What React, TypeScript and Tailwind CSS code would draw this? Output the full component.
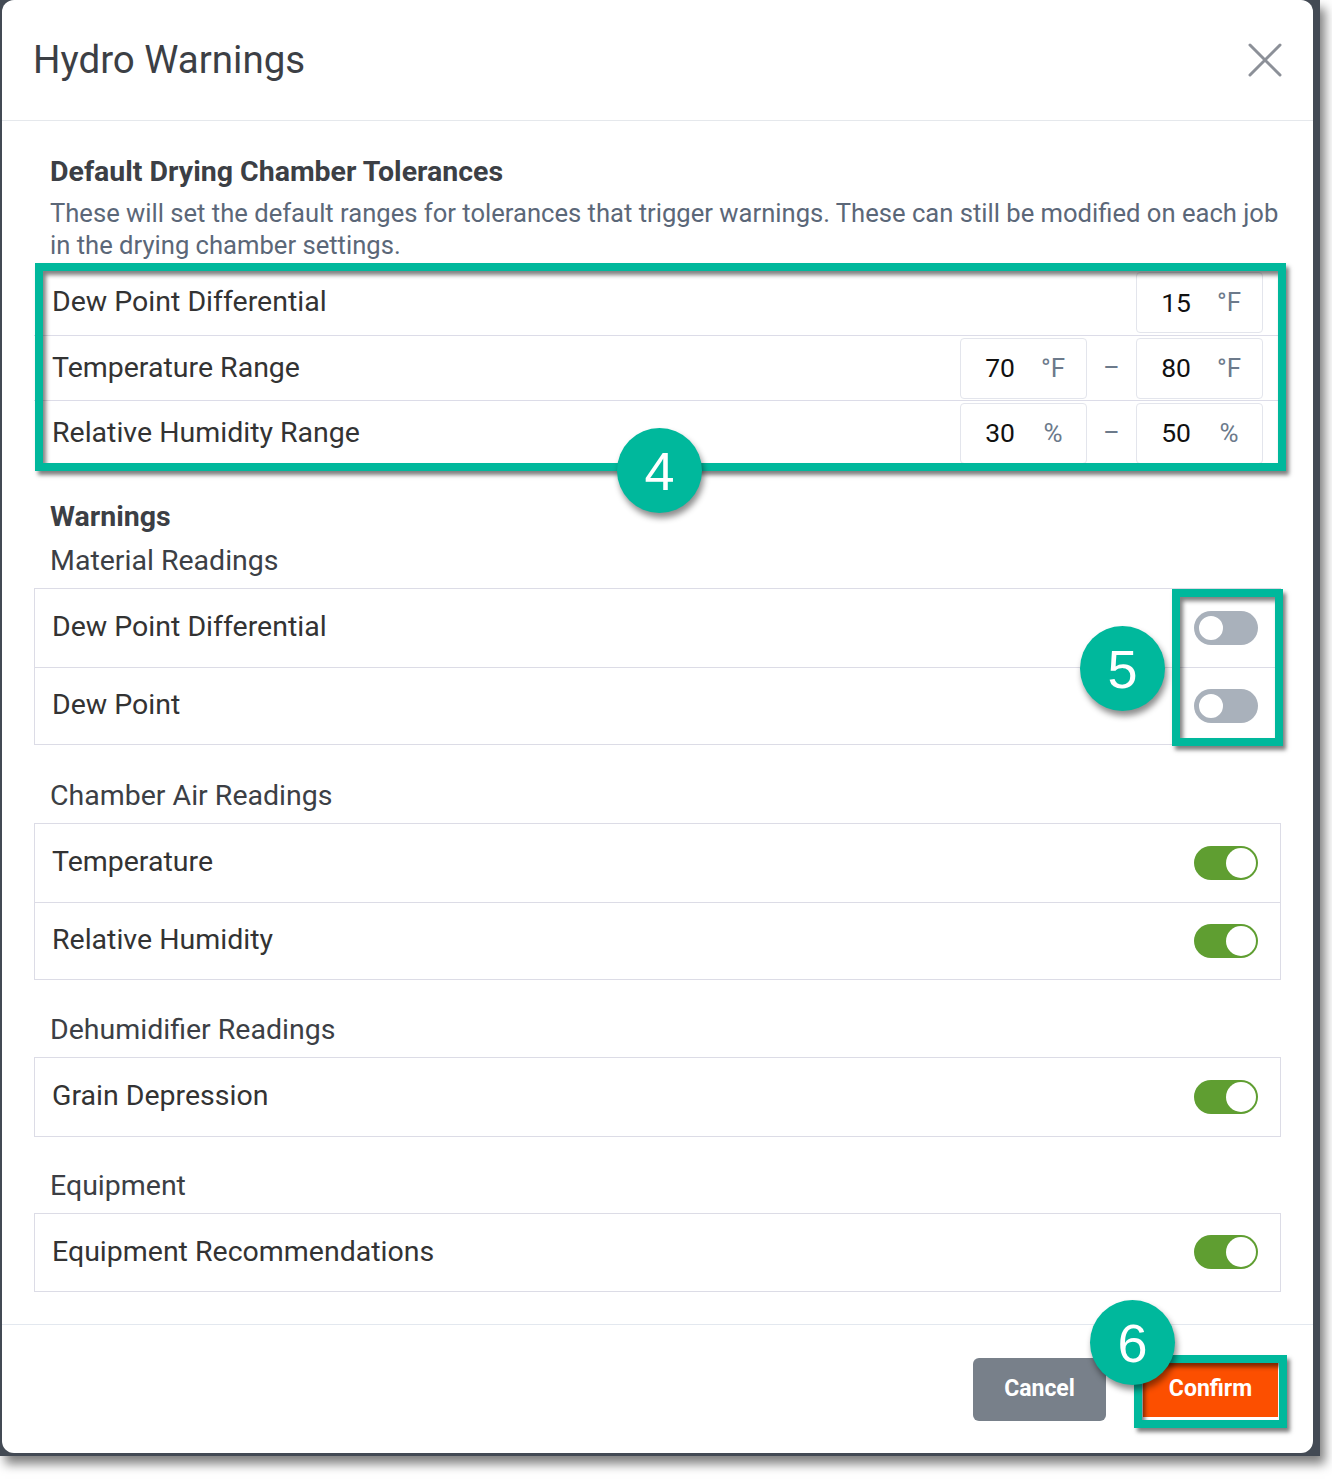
import React from "react"

function Toggle({ on }: { on: boolean }) {
  return on ? (
    <div className="flex h-[34px] w-[64px] items-center justify-end rounded-full bg-[#5f9e31] pr-[2px]">
      <div className="h-[30px] w-[30px] rounded-full bg-white" />
    </div>
  ) : (
    <div className="flex h-[34px] w-[64px] items-center rounded-full bg-[#a9b1bb] pl-[2px]">
      <div className="h-[30px] w-[30px] rounded-full border-[3px] border-[#a9b1bb] bg-white" />
    </div>
  )
}

function NumBox({ value, unit }: { value: string; unit: string }) {
  return (
    <div className="flex h-[61px] w-[127px] items-center rounded-[4px] border border-[#e3e5ec]">
      <div className="w-[65px] pr-[11px] text-right text-[26.5px] text-[#111]">{value}</div>
      <div className="w-[60px] pr-[6px] text-center text-[26px] text-[#6c7a8b]">{unit}</div>
    </div>
  )
}

function Badge({ n, className }: { n: string; className: string }) {
  return (
    <div
      className={`absolute flex h-[85px] w-[85px] items-center justify-center rounded-full bg-[#00b89c] text-[54px] leading-none text-white shadow-[2px_5px_6px_rgba(0,0,0,0.45)] ${className}`}
      style={{ fontFamily: "'Liberation Sans', Arial, sans-serif" }}
    >
      {n}
    </div>
  )
}

function ToggleCard({ rows }: { rows: { label: string; on: boolean }[] }) {
  return (
    <div className="border border-[#dcdce6]">
      {rows.map((r, i) => (
        <div
          key={r.label}
          className={`flex h-[77.5px] items-center justify-between pl-[17px] pr-[22px] ${i > 0 ? "border-t border-[#dcdce6]" : ""}`}
        >
          <span className="text-[28.5px] text-[#333]">{r.label}</span>
          <Toggle on={r.on} />
        </div>
      ))}
    </div>
  )
}

function SectionTitle({ children, bold }: { children: React.ReactNode; bold?: boolean }) {
  return (
    <div className={`pl-4 text-[28.5px] leading-[34px] text-[#3c3f45] ${bold ? "font-bold" : ""}`}>{children}</div>
  )
}

export default function App() {
  return (
    <div className="h-[1480px] w-[1332px] bg-white" style={{ fontFamily: "Roboto, 'Open Sans', sans-serif" }}>
      <div className="w-[1320px] bg-[#434a54] pb-[3px] pl-[2px] pr-[7px] shadow-[5px_8px_10px_rgba(0,0,0,0.5)]">
        <div className="relative w-[1311px] rounded-[12px] bg-white">
          {/* Header */}
          <div className="flex h-[121px] items-center justify-between border-b border-[#e5e8ec] pl-[31px] pr-[31px]">
            <h1 className="text-[38.5px] text-[#3c3f45]">Hydro Warnings</h1>
            <svg width="34" height="34" viewBox="0 0 34 34" fill="none" stroke="#8c9098" strokeWidth="3" strokeLinecap="round">
              <path d="M2 2L32 32M32 2L2 32" />
            </svg>
          </div>

          {/* Body */}
          <div className="px-8 pb-[32px] pt-[34px]">
            <div className="pl-4 text-[28.5px] font-bold leading-[34px] text-[#3c3f45]">Default Drying Chamber Tolerances</div>
            <p className="mt-[8px] pl-4 text-[25.6px] leading-[32px] text-[#5b6778]">
              These will set the default ranges for tolerances that trigger warnings. These can still be modified on each job in the drying chamber settings.
            </p>

            {/* Tolerances */}
            <div className="mt-[9px]">
              <div className="flex h-[65px] items-center justify-between pl-[18px] pr-[18px]">
                <span className="text-[28.5px] text-[#333]">Dew Point Differential</span>
                <NumBox value="15" unit="°F" />
              </div>
              <div className="flex h-[65px] items-center justify-between border-t border-[#dcdce8] pl-[18px] pr-[18px]">
                <span className="text-[28.5px] text-[#333]">Temperature Range</span>
                <div className="flex items-center">
                  <NumBox value="70" unit="°F" />
                  <span className="w-[49px] text-center text-[25px] text-[#6c7a8b]">–</span>
                  <NumBox value="80" unit="°F" />
                </div>
              </div>
              <div className="flex h-[65px] items-center justify-between border-t border-[#dcdce8] pl-[18px] pr-[18px]">
                <span className="text-[28.5px] text-[#333]">Relative Humidity Range</span>
                <div className="flex items-center">
                  <NumBox value="30" unit="%" />
                  <span className="w-[49px] text-center text-[25px] text-[#6c7a8b]">–</span>
                  <NumBox value="50" unit="%" />
                </div>
              </div>
            </div>

            <div className="mt-[35px]">
              <SectionTitle bold>Warnings</SectionTitle>
            </div>
            <div className="mb-[10px] mt-[10px]">
              <SectionTitle>Material Readings</SectionTitle>
            </div>
            <ToggleCard
              rows={[
                { label: "Dew Point Differential", on: false },
                { label: "Dew Point", on: false },
              ]}
            />

            <div className="mb-[10px] mt-[34px]">
              <SectionTitle>Chamber Air Readings</SectionTitle>
            </div>
            <ToggleCard
              rows={[
                { label: "Temperature", on: true },
                { label: "Relative Humidity", on: true },
              ]}
            />

            <div className="mb-[10px] mt-[33px]">
              <SectionTitle>Dehumidifier Readings</SectionTitle>
            </div>
            <ToggleCard rows={[{ label: "Grain Depression", on: true }]} />

            <div className="mb-[10px] mt-[32px]">
              <SectionTitle>Equipment</SectionTitle>
            </div>
            <ToggleCard rows={[{ label: "Equipment Recommendations", on: true }]} />
          </div>

          {/* Footer */}
          <div className="flex h-[129px] items-center justify-end gap-[37px] border-t border-[#e3e8ef] pr-[35px]">
            <button className="h-[63px] w-[133px] rounded-[6px] bg-[#78808a] text-[23px] font-bold text-white">Cancel</button>
            <button className="h-[56px] w-[135px] bg-[#fc4f00] text-[23px] font-bold text-white">Confirm</button>
          </div>

          {/* Annotations */}
          <div className="pointer-events-none absolute left-[33px] top-[263px] h-[208px] w-[1251px] border-[8px] border-[#00b89c] shadow-[3px_4px_4px_rgba(0,0,0,0.5),inset_3px_4px_4px_rgba(0,0,0,0.5)]" />
          <div className="pointer-events-none absolute left-[1170px] top-[589px] h-[157px] w-[111px] border-[8px] border-[#00b89c] shadow-[3px_4px_4px_rgba(0,0,0,0.5),inset_3px_4px_4px_rgba(0,0,0,0.5)]" />
          <div className="pointer-events-none absolute left-[1132px] top-[1355px] h-[73px] w-[153px] border-[8px] border-[#00b89c] shadow-[3px_4px_4px_rgba(0,0,0,0.5),inset_3px_4px_4px_rgba(0,0,0,0.5)]" />
          <Badge n="4" className="left-[615px] top-[428px]" />
          <Badge n="5" className="left-[1078px] top-[626px]" />
          <Badge n="6" className="left-[1088px] top-[1300px]" />
        </div>
      </div>
    </div>
  )
}
